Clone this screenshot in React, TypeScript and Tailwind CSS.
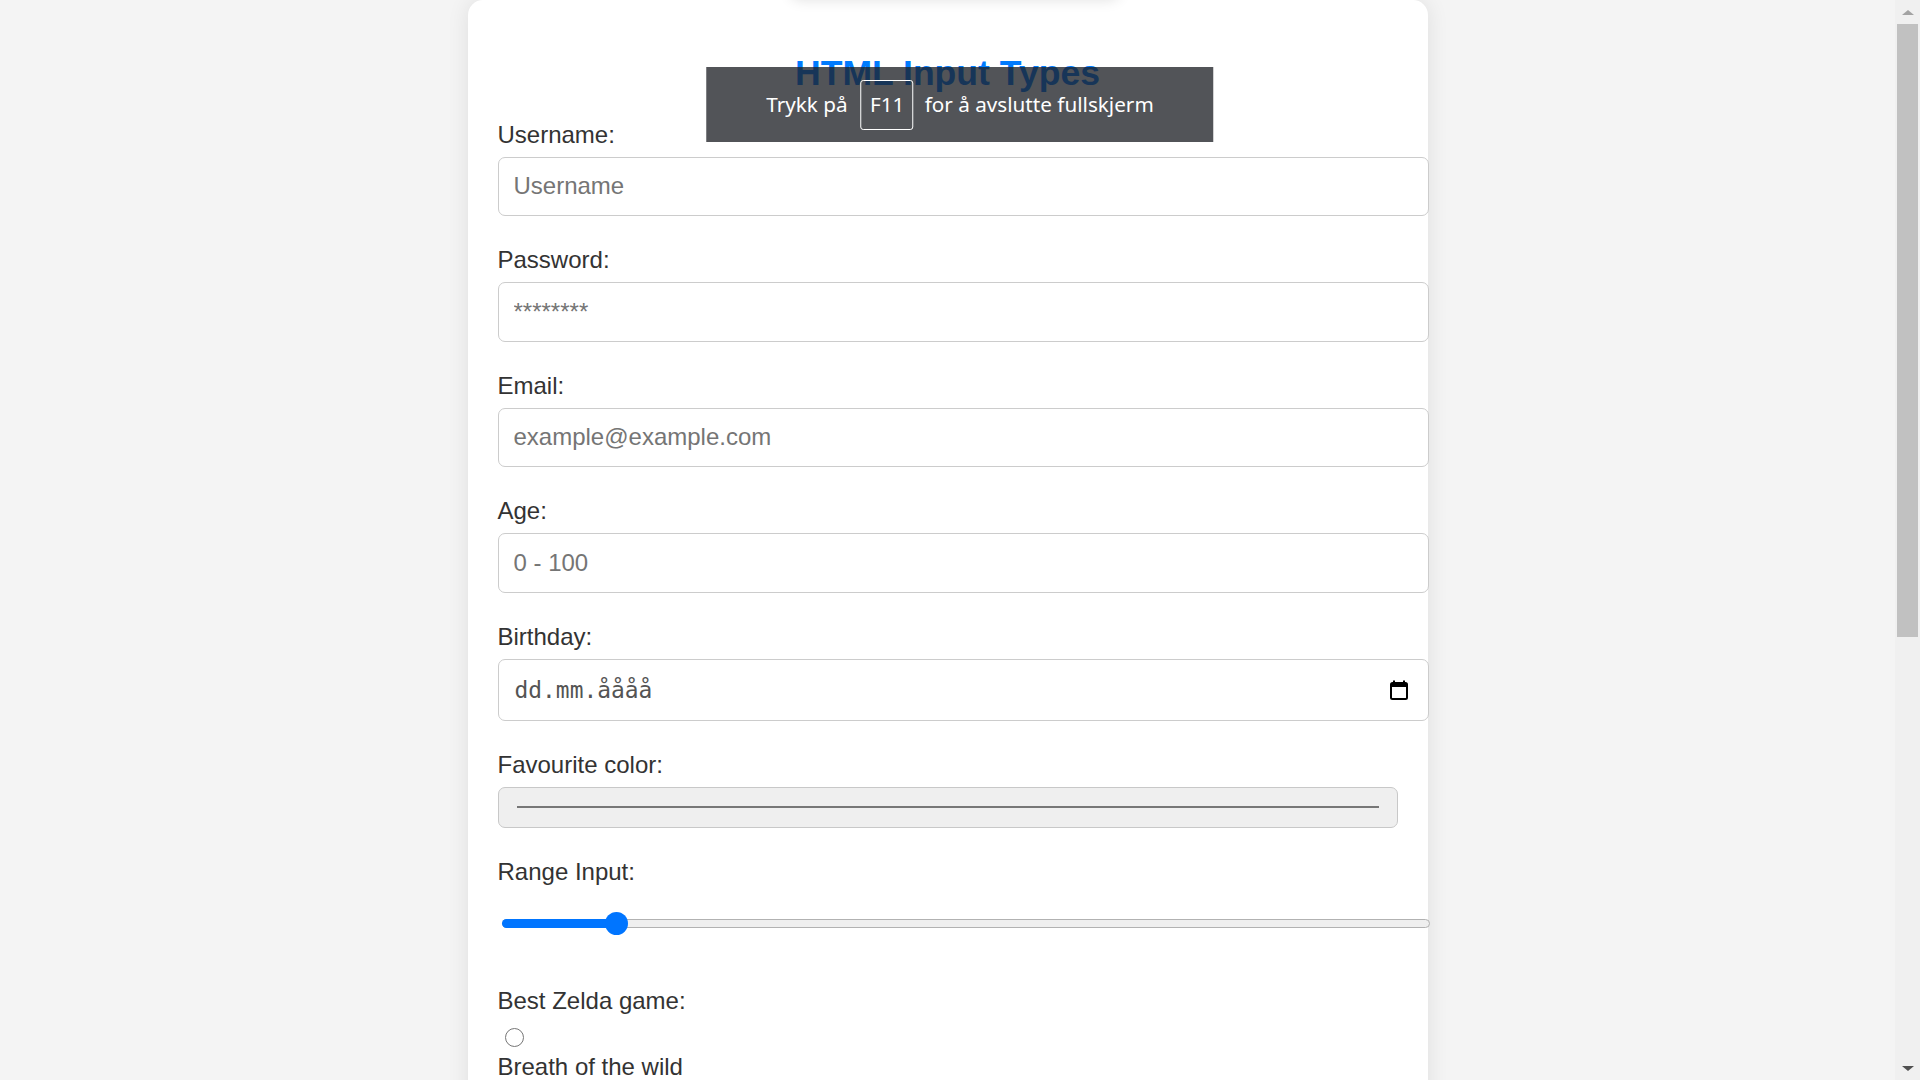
import { useState } from 'react';

// text fields shown at the top of the form
const TEXT_FIELDS = [
  { id: 'username', label: 'Username:', type: 'text', placeholder: 'Username' },
  { id: 'password', label: 'Password:', type: 'password', placeholder: '********' },
  { id: 'email', label: 'Email:', type: 'email', placeholder: 'example@example.com' },
  { id: 'age', label: 'Age:', type: 'text', placeholder: '0 - 100' },
];

const CalendarIcon = () => (
  <svg width="20" height="20" viewBox="0 0 20 20" fill="none">
    <rect x="2" y="3" width="16" height="16" rx="1.5" stroke="#000" strokeWidth="2" />
    <rect x="2" y="3" width="16" height="4" fill="#000" />
    <rect x="4" y="0.5" width="2" height="3" fill="#000" />
    <rect x="14" y="0.5" width="2" height="3" fill="#000" />
  </svg>
);

const App = () => {
  const [range] = useState(11.4);
  const [picked, setPicked] = useState(false);

  return (
    <div className="relative h-[1080px] w-[1920px] overflow-hidden flex bg-[#f4f4f4] font-['Liberation_Sans',Arial,sans-serif]">
      {/* Page */}
      <div className="flex-1">
        <div className="w-[960px] mx-auto bg-white rounded-[15px] px-[30px] pb-10 shadow-[0_0_22px_rgba(0,0,0,0.09)]">
          <h1 className="pt-[53px] text-center text-[35.6px] leading-[41px] font-bold text-[#007bff]">
            HTML Input Types
          </h1>

          <div className="mt-[26.5px]">
            {TEXT_FIELDS.map((f) => (
              <div key={f.id} className="mb-[30px]">
                <label htmlFor={f.id} className="block text-[24px] leading-[27.5px] text-[#333] mb-[8.5px]">
                  {f.label}
                </label>
                <input
                  id={f.id}
                  type="text"
                  placeholder={f.placeholder}
                  className="block w-[931px] h-[59.5px] px-[15px] bg-white border border-[#cccccc] rounded-[7px] text-[24px] text-[#333] placeholder:text-[#757575] outline-none"
                />
              </div>
            ))}

            {/* Birthday */}
            <div className="mb-[30px]">
              <div className="text-[24px] leading-[27.5px] text-[#333] mb-[8.5px]">Birthday:</div>
              <div className="w-[931px] h-[62px] pl-[16px] pr-[19px] flex items-center justify-between bg-white border border-[#cccccc] rounded-[7px]">
                <span className="pt-[1px] font-['DejaVu_Sans_Mono',monospace] text-[22.9px] text-[#545454]">dd.mm.åååå</span>
                <CalendarIcon />
              </div>
            </div>

            {/* Favourite color */}
            <div className="mb-[30px]">
              <div className="text-[24px] leading-[27.5px] text-[#333] mb-[8.5px]">Favourite color:</div>
              <div className="w-[900px] h-[41px] px-[18px] flex items-center bg-[#efefef] border border-[#c8c8c8] rounded-[7px]">
                <div className="w-full h-[2px] bg-[#777]" />
              </div>
            </div>

            {/* Range */}
            <div className="text-[24px] leading-[27.5px] text-[#333]">Range Input:</div>
            <div className="h-[102px] pt-[26.5px] pl-[4px]">
              <div className="relative w-[928px] h-[23px] flex items-center">
                <div className="relative w-full h-[9px] rounded-full bg-[#efefef] border border-[#b2b2b2]">
                  <div
                    className="absolute -left-px -top-px h-[9px] rounded-full bg-[#0075ff]"
                    style={{ width: `${(range / 100) * 905 + 11}px` }}
                  />
                </div>
                <div
                  className="absolute top-0 w-[23px] h-[23px] rounded-full bg-[#0075ff]"
                  style={{ left: `${(range / 100) * 905}px` }}
                />
              </div>
            </div>

            {/* Radio */}
            <div className="text-[24px] leading-[27.5px] text-[#333]">Best Zelda game:</div>
            <div className="pt-[13px] pl-[7px]">
              <span
                onClick={() => setPicked(!picked)}
                className="block w-[19px] h-[19px] rounded-full border-[1.5px] border-[#767676] bg-white"
              />
            </div>
            <div className="mt-[6.5px] text-[24px] leading-[27.5px] text-[#333]">Breath of the wild</div>
          </div>
        </div>
      </div>

      {/* Scrollbar */}
      <div className="w-[25px] h-full bg-[#f0f0f0] flex flex-col items-center">
        <div className="h-[24px] flex items-center justify-center">
          <div className="w-0 h-0 border-l-[6px] border-r-[6px] border-b-[5px] border-l-transparent border-r-transparent border-b-[#a3a3a3]" />
        </div>
        <div className="w-[21px] h-[613px] bg-[#c1c1c1]" />
        <div className="flex-1" />
        <div className="h-[24px] flex items-center justify-center">
          <div className="w-0 h-0 border-l-[6px] border-r-[6px] border-t-[5px] border-l-transparent border-r-transparent border-t-[#505050]" />
        </div>
      </div>

      {/* faint shadow of the notice at the top edge */}
      <div className="absolute -top-[24px] left-[790px] w-[330px] h-[20px] rounded-full bg-white shadow-[0_4px_14px_rgba(0,0,0,0.12)]" />

      {/* Fullscreen notice */}
      <div className="absolute top-[67px] left-1/2 -translate-x-1/2 h-[75px] px-[60px] flex items-center bg-[rgba(30,33,38,0.77)] text-white font-['Noto_Sans',sans-serif] text-[20.7px] whitespace-nowrap">
        <span>Trykk på</span>
        <span className="ml-[13px] mr-[11px] w-[53px] h-[50px] flex items-center justify-center border border-white rounded-[3px]">
          F11
        </span>
        <span>for å avslutte fullskjerm</span>
      </div>
    </div>
  );
};

export default App;
